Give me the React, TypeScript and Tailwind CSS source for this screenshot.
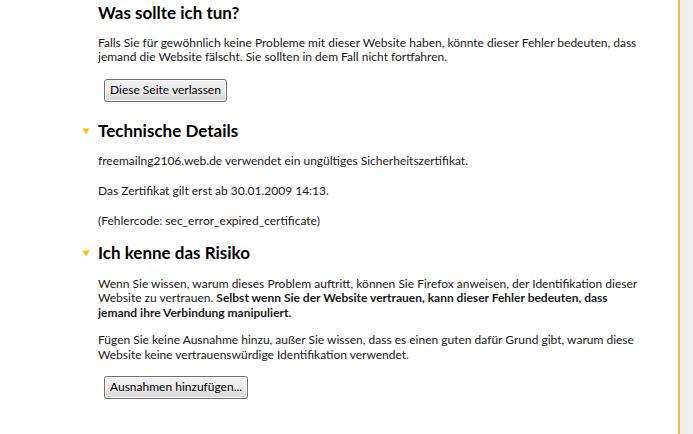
import React from 'react';

function Disclosure() {
  return (
    <svg width="8" height="8" viewBox="0 0 8 8" className="shrink-0">
      <path d="M0.5 1.5 H7.5 L4 7.5 Z" fill="#f2c200" />
    </svg>
  );
}

function Button({ children }: { children: React.ReactNode }) {
  return (
    <button className="ml-[6px] h-[23px] px-[5px] rounded-[3px] border border-[#707070] bg-gradient-to-b from-[#f2f2f2] via-[#ebebeb] to-[#d6d6d6] text-[12px] text-black leading-none shadow-[inset_0_0_0_1px_#fcfcfc]">
      {children}
    </button>
  );
}

export default function App() {
  return (
    <div
      className="flex w-[693px] h-[434px] bg-[#efefef] overflow-hidden text-[#1a1a1a]"
      style={{ fontFamily: 'Lato, "Liberation Sans", sans-serif' }}
    >
      <div className="w-[680px] h-[434px] bg-white border-r-[2px] border-[#f0b648] pl-[98px] pr-[40px] shrink-0">
        <h2 className="mt-[1px] text-[17px] font-bold leading-[24px] text-black">Was sollte ich tun?</h2>
        <p className="mt-[11px] text-[12px] leading-[14px]">
          Falls Sie für gewöhnlich keine Probleme mit dieser Website haben, könnte dieser Fehler bedeuten, dass
          jemand die Website fälscht. Sie sollten in dem Fall nicht fortfahren.
        </p>
        <div className="mt-[12px]">
          <Button>Diese Seite verlassen</Button>
        </div>

        <div className="mt-[17px] -ml-[16px] flex items-center gap-[8px]">
          <Disclosure />
          <h2 className="text-[17px] font-bold leading-[24px] text-black">Technische Details</h2>
        </div>
        <p className="mt-[10px] text-[12px] leading-[15px]">
          freemailng2106.web.de verwendet ein ungültiges Sicherheitszertifikat.
        </p>
        <p className="mt-[15px] text-[12px] leading-[15px]">Das Zertifikat gilt erst ab 30.01.2009 14:13.</p>
        <p className="mt-[15px] text-[12px] leading-[15px]">(Fehlercode: sec_error_expired_certificate)</p>

        <div className="mt-[13px] -ml-[16px] flex items-center gap-[8px]">
          <Disclosure />
          <h2 className="text-[17px] font-bold leading-[24px] text-black">Ich kenne das Risiko</h2>
        </div>
        <p className="mt-[12px] text-[12px] leading-[14.5px]">
          Wenn Sie wissen, warum dieses Problem auftritt, können Sie Firefox anweisen, der Identifikation dieser
          Website zu vertrauen.{' '}
          <b>
            Selbst wenn Sie der Website vertrauen, kann dieser Fehler bedeuten, dass jemand ihre Verbindung
            manipuliert.
          </b>
        </p>
        <p className="mt-[13px] text-[12px] leading-[14.5px]">
          Fügen Sie keine Ausnahme hinzu, außer Sie wissen, dass es einen guten dafür Grund gibt, warum diese
          Website keine vertrauenswürdige Identifikation verwendet.
        </p>
        <div className="mt-[11px]">
          <Button>Ausnahmen hinzufügen...</Button>
        </div>
      </div>
    </div>
  );
}
